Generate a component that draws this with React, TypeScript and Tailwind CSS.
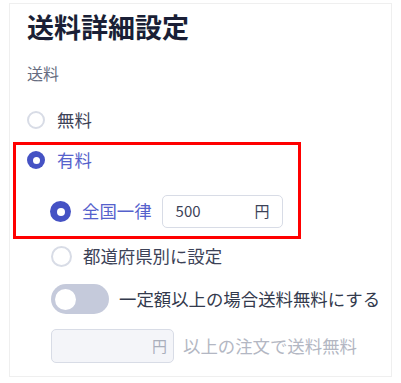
import React from "react";

const font = { fontFamily: '"Noto Sans CJK JP", "Noto Sans", sans-serif' };

function Radio({ checked, size = "sm" }: { checked: boolean; size?: "sm" | "lg" }) {
  const dim = size === "lg" ? "h-[21px] w-[21px]" : "h-[18px] w-[18px]";
  if (checked) {
    return (
      <span className={`flex ${dim} shrink-0 items-center justify-center rounded-full bg-[#4552c4]`}>
        <span className={size === "lg" ? "h-[8px] w-[8px] rounded-full bg-white" : "h-[7px] w-[7px] rounded-full bg-white"} />
      </span>
    );
  }
  return <span className={`block ${dim} shrink-0 rounded-full border-2 border-[#d8dce6] bg-white`} />;
}

export default function App() {
  return (
    <div className="min-h-[383px] bg-white pt-[3px] pl-[9px]" style={font}>
      <section className="h-[374px] w-[383px] border border-[#efefef] pl-[17px]">
        <h2 className="flex h-[44px] items-center text-[27px] font-bold leading-none text-[#1a1f36]">
          送料詳細設定
        </h2>
        <p className="flex h-[50px] items-center text-[16px] text-[#666c80]">送料</p>

        <label className="flex h-[44px] items-center gap-3 text-[17.4px] text-[#3c4257]">
          <Radio checked={false} />
          <span>無料</span>
        </label>

        <div className="-ml-[14px] h-[97px] w-[288px] border-[3px] border-[#ff0000] pl-[11px]">
          <label className="flex h-[30px] items-center gap-3 text-[17.4px] text-[#5561cc]">
            <Radio checked />
            <span>有料</span>
          </label>
          <div className="flex items-center pt-[20px] pl-[23px]">
            <Radio checked size="lg" />
            <span className="ml-[11px] text-[17.4px] text-[#5561cc]">全国一律</span>
            <div className="ml-[10px] flex h-[33px] w-[121px] items-center justify-between rounded-[5px] border border-[#d8dce6] pr-[12px] pl-[13px] text-[15px] text-[#3c4257]">
              <span>500</span>
              <span>円</span>
            </div>
          </div>
        </div>

        <div className="pl-[24px]">
          <label className="flex h-[34px] items-center text-[17.4px] text-[#3c4257]">
            <Radio checked={false} size="lg" />
            <span className="ml-[11px]">都道府県別に設定</span>
          </label>

          <div className="mt-[11px] flex h-[30px] items-center">
            <span className="flex h-[30px] w-[58px] shrink-0 items-center rounded-full bg-[#c5cadb] pl-[4px]">
              <span className="h-[21px] w-[21px] rounded-full bg-white" />
            </span>
            <span className="ml-[10px] text-[17.4px] text-[#333a4d]">一定額以上の場合送料無料にする</span>
          </div>

          <div className="mt-[15px] flex h-[34px] items-center">
            <div className="flex h-[34px] w-[123px] shrink-0 items-center justify-end rounded-[5px] border border-[#d8dce6] bg-[#f4f5f9] pr-[6px] text-[15px] text-[#a9aebb]">
              円
            </div>
            <span className="ml-[9px] text-[17.4px] text-[#b3b7c3]">以上の注文で送料無料</span>
          </div>
        </div>
      </section>
    </div>
  );
}
